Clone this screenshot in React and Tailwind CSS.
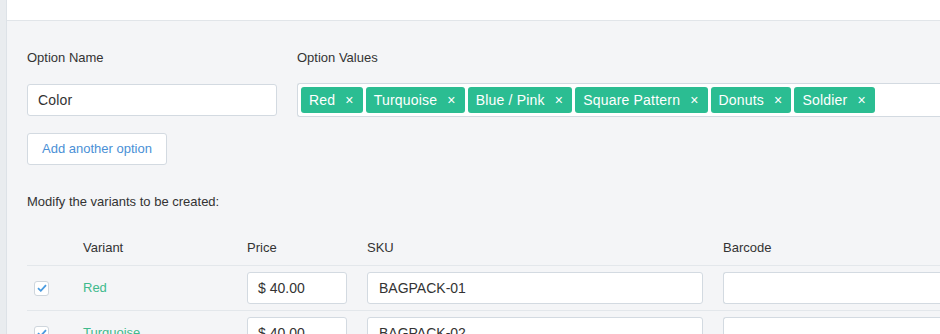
import React from "react";

const tags = ["Red", "Turquoise", "Blue / Pink", "Square Pattern", "Donuts", "Soldier"];

const rows = [
  { name: "Red", price: "$ 40.00", sku: "BAGPACK-01" },
  { name: "Turquoise", price: "$ 40.00", sku: "BAGPACK-02" },
];

function Tag({ label }) {
  return (
    <span className="flex h-[26px] items-center rounded-[3px] bg-[#2bbd92] pl-2 pr-[9px] text-[14px] tracking-[0.2px] text-white">
      {label}
      <span className="ml-[10px] text-[14px] leading-none">×</span>
    </span>
  );
}

function Check() {
  return (
    <div className="flex h-[15px] w-[15px] items-center justify-center rounded-[3px] border border-[#cfd6dd] bg-white">
      <svg width="10" height="8" viewBox="0 0 10 8">
        <path d="M1 4.2 L3.8 6.8 L9 1.2" fill="none" stroke="#4a9be0" strokeWidth="1.8" />
      </svg>
    </div>
  );
}

export default function App() {
  return (
    <div className="flex h-[334px] w-[940px] overflow-hidden bg-[#f4f5f7] text-[#333] font-['Liberation_Sans',Arial,sans-serif]">
      <div className="w-[7px] shrink-0 border-r border-[#dde2e7] bg-[#e9ecef]" />
      <div className="flex-1">
        <div className="h-[21px] border-b border-[#e1e5e9] bg-white" />
        <div className="pl-[20px]">
          <div className="mt-[28px] flex gap-[20px]">
            <div className="w-[250px] shrink-0">
              <div className="h-[18px] text-[13px] leading-[18px]">Option Name</div>
              <div className="mt-[17px] flex h-[32px] items-center rounded-[3px] border border-[#d3dae1] bg-white px-[10px] text-[14px] tracking-[0.2px]">
                Color
              </div>
            </div>
            <div className="flex-1">
              <div className="h-[18px] text-[13px] leading-[18px]">Option Values</div>
              <div className="mt-[16px] flex h-[34px] items-center gap-[3px] rounded-l-[3px] border border-r-0 border-[#d3dae1] bg-white pl-[3px]">
                {tags.map((t) => (
                  <Tag key={t} label={t} />
                ))}
              </div>
            </div>
          </div>

          <button className="mt-[16px] flex h-[32px] w-[140px] items-center justify-center rounded-[3px] border border-[#d3dae1] bg-white text-[13px] text-[#4a90d6]">
            Add another option
          </button>

          <div className="mt-[28px] h-[18px] text-[13px] leading-[18px]">Modify the variants to be created:</div>

          <div className="mt-[19px]">
            <div className="flex h-[36px] items-center border-b border-[#e3e7eb] text-[13px]">
              <div className="w-[56px]" />
              <div className="w-[164px]">Variant</div>
              <div className="w-[120px]">Price</div>
              <div className="w-[356px]">SKU</div>
              <div>Barcode</div>
            </div>
            {rows.map((r) => (
              <div key={r.name} className="flex h-[45px] items-center border-b border-[#e3e7eb]">
                <div className="w-[56px] pl-[7px]">
                  <Check />
                </div>
                <div className="w-[164px] text-[13px] text-[#3fba8c]">{r.name}</div>
                <div className="w-[120px]">
                  <div className="flex h-[32px] w-[100px] items-center rounded-[3px] border border-[#d3dae1] bg-white px-[10px] text-[14px]">
                    {r.price}
                  </div>
                </div>
                <div className="w-[356px]">
                  <div className="flex h-[32px] w-[336px] items-center rounded-[3px] border border-[#d3dae1] bg-white px-[11px] text-[14px]">
                    {r.sku}
                  </div>
                </div>
                <div className="flex-1">
                  <div className="h-[32px] rounded-l-[3px] border border-r-0 border-[#d3dae1] bg-white" />
                </div>
              </div>
            ))}
          </div>
        </div>
      </div>
    </div>
  );
}
